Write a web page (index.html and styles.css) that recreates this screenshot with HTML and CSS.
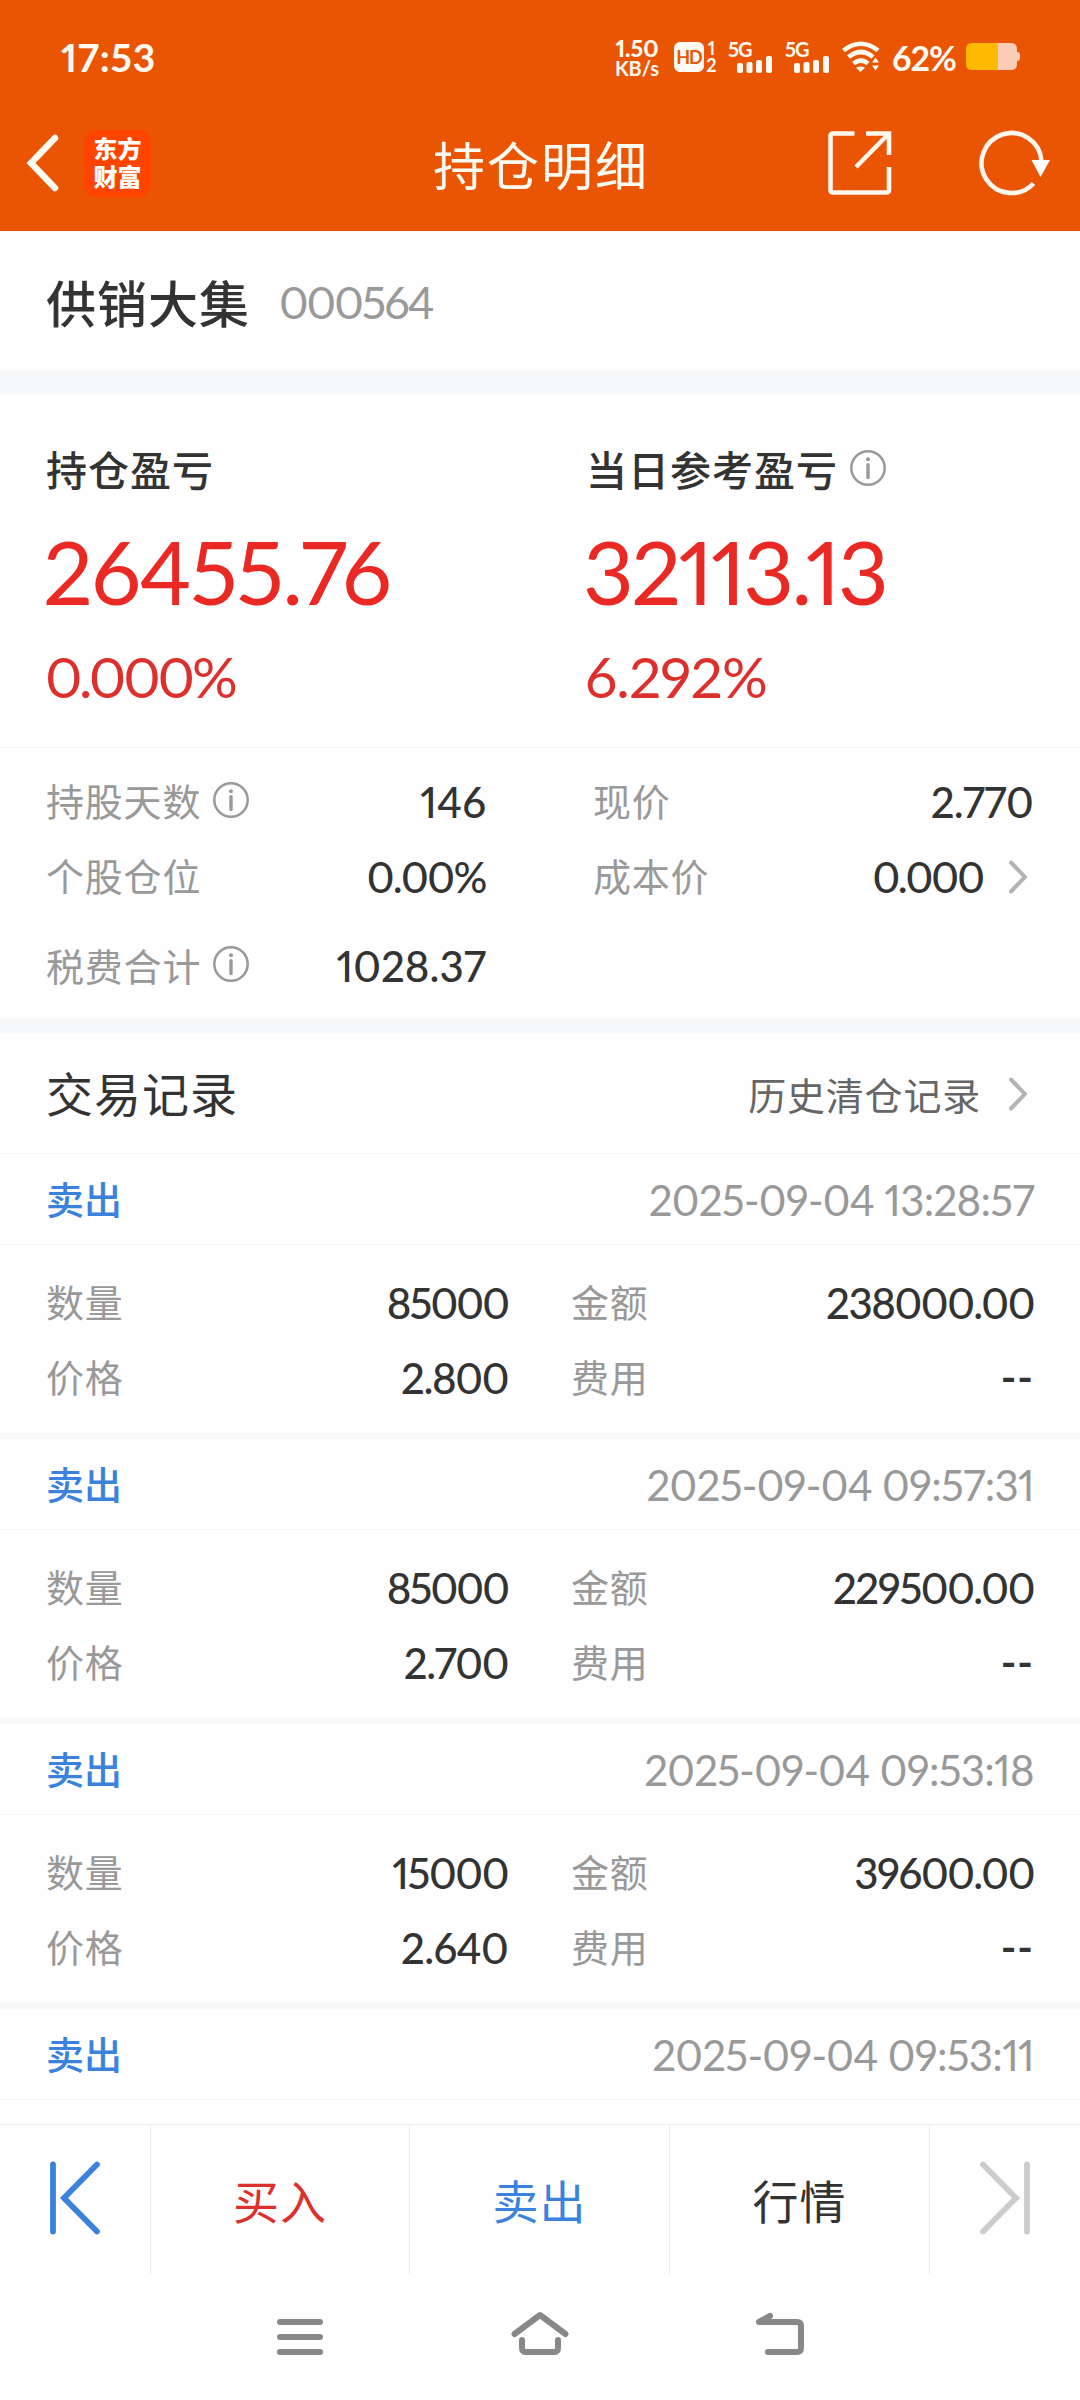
FILE: index.html
```html
<!DOCTYPE html>
<html lang="zh-CN">
<head>
<meta charset="utf-8">
<title>持仓明细</title>
<link rel="stylesheet" href="styles.css">
</head>
<body>
<svg class="defs" width="0" height="0">
  <symbol id="info" viewBox="0 0 36 36"><circle cx="18" cy="18" r="16.7" fill="none" stroke="#999" stroke-width="2.5"/><circle cx="18" cy="9.3" r="2" fill="#999"/><path d="M18 14.8V27.6" stroke="#999" stroke-width="3.4" stroke-linecap="round"/></symbol>
  <symbol id="more" viewBox="0 0 18 34"><path d="M2 2.500 16 17 2 31.500" fill="none" stroke="#b3b3b3" stroke-width="4" stroke-linecap="round"/></symbol>
</svg>
<header class="top">
  <div class="status">
    <span class="clock">17:53</span>
    <div class="indicators">
      <span class="speed"><b>1.50</b><i>KB/s</i></span>
      <span class="hd"><b>HD</b></span>
      <span class="sims"><b>1</b><b>2</b></span>
      <span class="cell"><b>5G</b><svg width="36" height="18"><g fill="#fffaf2"><rect x="0" y="7" width="6" height="10" rx="2"/><rect x="9.500" y="6" width="6" height="11" rx="2"/><rect x="19" y="4" width="6" height="13" rx="2"/><rect x="29" y="0" width="6" height="17" rx="2"/></g></svg></span>
      <span class="cell"><b>5G</b><svg width="36" height="18"><g fill="#fffaf2"><rect x="0" y="7" width="6" height="10" rx="2"/><rect x="9.500" y="6" width="6" height="11" rx="2"/><rect x="19" y="4" width="6" height="13" rx="2"/><rect x="29" y="0" width="6" height="17" rx="2"/></g></svg></span>
      <svg class="wifi" width="38" height="30" viewBox="0 0 38 30"><g fill="none" stroke="#fffaf2" stroke-width="4.600"><path d="M1.500 8.500Q19-5 36 8.500"/><path d="M6.500 15Q19 5 31 15"/><path d="M11.500 21.500Q19 15.500 26 21.500"/></g><path d="M18.500 30 14 25.800Q18.500 23 23 25.800Z M33.500 15.500 37 20.500H30Z M30 23.500H37L33.500 28.500Z" fill="#fffaf2"/></svg>
      <span class="percent">62%</span>
      <svg class="battery" width="54" height="28" viewBox="0 0 54 28"><path d="M6 0H45Q51 0 51 6V9Q54 9 54 12V15Q54 18 51 18V21Q51 27 45 27H32V0Z" fill="#fbcdb8"/><path d="M32 0H6Q0 0 0 6V21Q0 27 6 27H32Z" fill="#ffb900"/></svg>
    </div>
  </div>
  <div class="titlebar">
    <div class="left">
      <svg width="34" height="58" viewBox="0 0 34 58"><path d="M31 4 7 29 31 54" fill="none" stroke="#fffaf2" stroke-width="6.500" stroke-linecap="round"/></svg>
      <span class="logo">东方<br>财富</span>
    </div>
    <h1>持仓明细</h1>
    <div class="right">
      <svg width="64" height="64" viewBox="0 0 64 64"><path d="M26.500 2.500H5Q2.500 2.500 2.500 5V59Q2.500 61.500 5 61.500H58Q61 61.500 61 59V36M38 2.500H61V24M61 2.500 28 36" fill="none" stroke="#fff7ee" stroke-width="4.600"/></svg>
      <svg width="72" height="64" viewBox="0 0 72 64"><path d="M53.500 52.500A30 30 0 1 1 61.500 30" fill="none" stroke="#fff7ee" stroke-width="4.600"/><path d="M51.500 29H70L60.500 46Z" fill="#fff"/></svg>
    </div>
  </div>
</header>
<section class="stock"><h2>供销大集</h2><span class="num">000564</span></section>
<section class="profit">
  <div><div class="caption">持仓盈亏</div><div class="big">26455.76</div><div class="rate zeros">0.000%</div></div>
  <div><div class="caption">当日参考盈亏<svg class="ic" width="36" height="36"><use href="#info"/></svg></div><div class="big ones">32113.13</div><div class="rate">6.292%</div></div>
</section>
<section class="facts">
  <div class="fact"><span class="label">持股天数<svg class="ic" width="36" height="36"><use href="#info"/></svg></span><span class="val">146</span></div>
  <div class="fact"><span class="label">现价</span><span class="val slight">2.770</span></div>
  <div class="fact"><span class="label">个股仓位</span><span class="val tight">0.00%</span></div>
  <div class="fact"><span class="label">成本价</span><span class="val zeros">0.000<svg class="go" width="18" height="34"><use href="#more"/></svg></span></div>
  <div class="fact"><span class="label">税费合计<svg class="ic" width="36" height="36"><use href="#info"/></svg></span><span class="val">1028.37</span></div>
</section>
<section class="history"><h3>交易记录</h3><span class="link">历史清仓记录<svg class="go" width="18" height="34"><use href="#more"/></svg></span></section>
<main class="trades">
  <article>
    <div class="head"><span class="side">卖出</span><time>2025-09-04 13:28:57</time></div>
    <div class="body"><span class="label">数量</span><span class="val zeros">85000</span><span class="label">金额</span><span class="val tight">238000.00</span><span class="label">价格</span><span class="val tight">2.800</span><span class="label">费用</span><span class="val dash">--</span></div>
  </article>
  <article>
    <div class="head"><span class="side">卖出</span><time>2025-09-04 09:57:31</time></div>
    <div class="body"><span class="label">数量</span><span class="val zeros">85000</span><span class="label">金额</span><span class="val tight">229500.00</span><span class="label">价格</span><span class="val tight">2.700</span><span class="label">费用</span><span class="val dash">--</span></div>
  </article>
  <article>
    <div class="head"><span class="side">卖出</span><time>2025-09-04 09:53:18</time></div>
    <div class="body"><span class="label">数量</span><span class="val tight">15000</span><span class="label">金额</span><span class="val tight">39600.00</span><span class="label">价格</span><span class="val slight">2.640</span><span class="label">费用</span><span class="val dash">--</span></div>
  </article>
  <article>
    <div class="head"><span class="side">卖出</span><time>2025-09-04 09:53:11</time></div>
  </article>
</main>
<nav class="actions">
  <span><svg width="50" height="74" viewBox="0 0 50 74"><path d="M3 3.500V70.500M47 3.500 14 37 47 70.500" fill="none" stroke="#3b82dc" stroke-width="5.800" stroke-linecap="round"/></svg></span>
  <span class="buy">买入</span><span class="sell">卖出</span><span>行情</span>
  <span><svg width="50" height="74" viewBox="0 0 50 74"><path d="M47 3.500V70.500M3 3.500 36 37 3 70.500" fill="none" stroke="#ccc" stroke-width="5.800" stroke-linecap="round"/></svg></span>
</nav>
<footer class="system">
  <svg width="60" height="50" viewBox="0 0 60 50"><path d="M10 10H50M10 25H50M10 40H50" stroke="#888" stroke-width="6" stroke-linecap="round"/></svg>
  <svg width="60" height="50" viewBox="0 0 60 50"><path d="M4.500 22 30 3 55.500 22M12 28V36Q12 40 16 40H44Q48 40 48 36V28" fill="none" stroke="#888" stroke-width="6" stroke-linecap="round" stroke-linejoin="round"/></svg>
  <svg width="60" height="50" viewBox="0 0 60 50"><path d="M20 4 9 10H47Q51 10 51 14V36Q51 40 47 40H18" fill="none" stroke="#888" stroke-width="6" stroke-linecap="round" stroke-linejoin="round"/></svg>
</footer>
</body>
</html>
```
FILE: styles.css
```css
* { box-sizing: border-box; }
body { margin: 0; width: 1080px; height: 2400px; overflow: hidden; display: flex; flex-direction: column; background: #fefefe; color: #333; font-family: Lato, "Noto Sans CJK SC", sans-serif; font-variant-numeric: proportional-nums; }
h1, h2, h3 { margin: 0; }
b, i { font-style: normal; }
svg { display: block; flex: none; overflow: visible; }
.defs { display: none; }
.top { height: 231px; background: #ea5504; color: #fffaf2; flex: none; }
.status { height: 98px; padding: 16px 60px 0 61px; display: flex; align-items: center; justify-content: space-between; }
.clock { font-size: 39px; font-weight: 700; letter-spacing: .8px; }
.indicators { display: flex; align-items: center; }
.speed { width: 46px; display: flex; flex-direction: column; align-items: center; line-height: 21px; font-size: 23px; font-weight: 700; margin-right: 14px; padding-top: 1px; white-space: nowrap; }
.speed i { font-size: 20px; line-height: 19px; }
.hd { width: 30px; height: 30px; border-radius: 6px; background: #fffaf2; color: #ea5504; font-size: 18px; line-height: 30px; text-align: center; letter-spacing: -1px; margin-right: 2px; }
.sims { width: 11px; height: 34px; display: flex; flex-direction: column; align-items: center; font-size: 18px; line-height: 17px; margin-right: 11px; }
.cell { width: 45px; height: 32px; display: flex; flex-direction: column; align-items: flex-start; font-size: 20px; line-height: 16px; margin-right: 12px; letter-spacing: -1px; }
.cell svg { margin: -1px 0 0 9px; }
.wifi { margin-right: 12px; }
.percent { width: 64px; font-size: 34px; font-weight: 700; letter-spacing: -1px; margin-right: 10px; white-space: nowrap; }
.titlebar { height: 133px; padding: 0 28px 3px 24px; display: grid; grid-template-columns: 1fr auto 1fr; align-items: center; }
.left { display: flex; align-items: center; gap: 26px; }
.logo { width: 67px; height: 67px; border-radius: 13px; background: #ff4400; color: #fff; font: 900 24px/28px "Noto Sans CJK SC", sans-serif; text-align: center; padding-top: 4px; }
h1 { font-weight: 400; font-size: 52px; letter-spacing: 2px; padding-left: 6px; }
.right { display: flex; justify-content: flex-end; gap: 88px; }
.stock { height: 140px; padding: 0 46px; display: flex; align-items: center; gap: 29px; flex: none; }
h2 { font-weight: 500; font-size: 50px; letter-spacing: 1px; }
.num { font-size: 45px; letter-spacing: -2px; padding-top: 2px; color: #999; }
.profit { border-top: 23px solid #f6f8fa; height: 377px; padding: 47px 46px 0; display: grid; grid-template-columns: 540px 1fr; border-bottom: 1px solid #f5f5f5; flex: none; }
.caption { height: 54px; display: flex; align-items: center; font-size: 41px; letter-spacing: 1px; font-weight: 500; }
.ic { margin-left: 12px; }
.big { height: 106px; line-height: 106px; margin: 23px 0 0 -3px; font-size: 88px; letter-spacing: -1.7px; color: #ea2824; }
.big.ones { letter-spacing: -2.5px; }
.rate { font-size: 57px; line-height: 60px; letter-spacing: -.9px; color: #dc302c; margin-top: 22px; margin-left: -1px; }
.rate.zeros { letter-spacing: -3.1px; }
.facts { height: 285px; padding: 16px 47px 0 46px; display: grid; grid-template-columns: 440px 440px; justify-content: space-between; grid-template-rows: 75px 75px 104px; border-bottom: 15px solid #f6f8fa; flex: none; }
.fact { display: flex; justify-content: space-between; align-items: center; }
.label { display: flex; align-items: center; font-size: 38px; letter-spacing: .8px; padding-bottom: 4px; color: #999; }
.val { display: flex; align-items: center; font-size: 42px; font-weight: 500; }
.val.slight { letter-spacing: -.7px; }
.val.tight { letter-spacing: -1.4px; }
.val.zeros { letter-spacing: -1.9px; }
.val.dash { font-weight: 700; letter-spacing: 1px; padding-bottom: 2px; }
.go { margin-left: 26px; margin-right: 6px; }
.history { height: 121px; padding: 0 47px 0 46px; display: flex; justify-content: space-between; align-items: center; border-bottom: 1px solid #f5f5f5; flex: none; }
h3 { font-size: 47px; font-weight: 400; letter-spacing: 1px; padding-bottom: 3px; }
.link { display: flex; align-items: center; font-size: 38px; letter-spacing: .8px; color: #666; padding-top: 1px; }
.link .go { margin-left: 28px; }
.trades { height: 970px; flex: none; overflow: hidden; }
article { height: 285px; border-bottom: 6px solid #f6f8fa; }
.head { height: 91px; padding: 0 46px; display: flex; justify-content: space-between; align-items: center; border-bottom: 1px solid #f5f5f5; }
.side { font-size: 38px; font-weight: 500; padding-bottom: 3px; color: #3b82dc; }
time { font-size: 42px; letter-spacing: -.7px; padding-top: 1px; color: #999; }
.body { height: 188px; padding: 20px 46px 0 46px; display: grid; grid-template-columns: 90px 372px 63px 90px 1fr; grid-template-rows: 75px 75px; align-items: center; }
.body .val { justify-content: flex-end; }
.body .label:nth-child(4n+3) { grid-column: 4; }
.actions { height: 150px; display: grid; grid-template-columns: 151px 259px 260px 260px 150px; border-top: 1px solid #ebebeb; flex: none; }
.actions span { display: flex; align-items: center; justify-content: center; border-right: 1px solid #ebebeb; font-size: 46px; letter-spacing: 1px; padding-bottom: 2px; }
.actions span:last-child { border: 0; }
.actions span svg { margin-top: -2px; }
.buy { color: #dc302c; }
.sell { color: #3b82dc; }
.system { height: 126px; display: flex; justify-content: center; gap: 180px; padding-top: 38px; flex: none; }
```
